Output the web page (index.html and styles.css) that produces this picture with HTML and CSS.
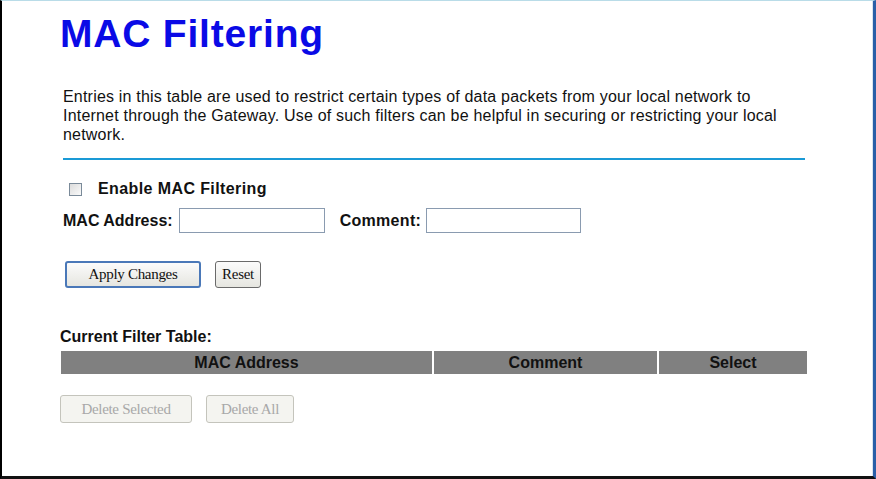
FILE: index.html
```html
<!DOCTYPE html>
<html>
<head>
<meta charset="utf-8">
<title>MAC Filtering</title>
<link rel="stylesheet" href="styles.css">
</head>
<body>
<div class="frame">
  <div class="page">
    <h1 class="title">MAC Filtering</h1>
    <p class="intro">Entries in this table are used to restrict certain types of data packets from your local network to Internet through the Gateway. Use of such filters can be helpful in securing or restricting your local network.</p>
    <hr class="rule">
    <div class="row enable-row">
      <span class="checkbox"></span>
      <span class="label">Enable MAC Filtering</span>
    </div>
    <div class="row field-row">
      <span class="label">MAC Address:</span>
      <span class="input mac-input"></span>
      <span class="label comment-label">Comment:</span>
      <span class="input comment-input"></span>
    </div>
    <div class="row button-row">
      <button class="btn btn-apply">Apply Changes</button>
      <button class="btn btn-reset">Reset</button>
    </div>
    <div class="table-title label">Current Filter Table:</div>
    <div class="filter-table">
      <div class="th th-mac">MAC Address</div>
      <div class="th th-comment">Comment</div>
      <div class="th th-select">Select</div>
    </div>
    <div class="row delete-row">
      <button class="btn btn-disabled btn-del-sel">Delete Selected</button>
      <button class="btn btn-disabled btn-del-all">Delete All</button>
    </div>
  </div>
</div>
</body>
</html>
```

FILE: styles.css
```css
html, body {
  margin: 0;
  padding: 0;
  background: #ffffff;
}
.frame {
  width: 876px;
  height: 479px;
  box-sizing: border-box;
  border-left: 2px solid #000;
  border-top: 1px solid #b9dce8;
  border-right: 3px solid #2a5fa8;
  border-bottom: 3px solid #111;
  box-shadow: inset -1px 0 0 #d9e4ef;
  overflow: hidden;
  font-family: "Liberation Sans", Arial, sans-serif;
  color: #111;
}
.page {
  padding: 9px 0 0 58px;
}
.title {
  margin: 0;
  font-size: 39px;
  font-weight: bold;
  color: #0a0ae6;
  line-height: 48px;
  letter-spacing: 0.8px;
}
.intro {
  margin: 29px 0 0 3px;
  width: 722px;
  font-size: 16px;
  line-height: 19px;
  letter-spacing: 0.2px;
}
.rule {
  margin: 14px 0 0 3px;
  width: 742px;
  height: 2px;
  border: 0;
  background: #1a9ad6;
}
.row {
  display: flex;
  align-items: center;
}
.label {
  font-weight: bold;
  font-size: 16px;
}
.enable-row {
  margin: 20px 0 0 9px;
  gap: 16px;
  letter-spacing: 0.4px;
}
.checkbox {
  width: 11px;
  height: 11px;
  border: 1px solid #7a8a99;
  background: linear-gradient(135deg, #dcdcdc, #fafafa);
}
.field-row {
  margin: 10px 0 0 3px;
}
.input {
  display: block;
  height: 23px;
  border: 1px solid #8a9bb0;
  background: #fff;
}
.mac-input {
  width: 144px;
  margin-left: 6px;
}
.comment-label {
  margin-left: 15px;
  letter-spacing: 0.3px;
}
.comment-input {
  width: 153px;
  margin-left: 5px;
}
.button-row {
  margin: 28px 0 0 5px;
  gap: 14px;
}
.btn {
  font-family: "Liberation Serif", "Times New Roman", serif;
  font-size: 15px;
  height: 27px;
  padding: 0 8px;
  background: linear-gradient(#fbfbfb, #e6e6e0);
  border: 1px solid #6a6a6a;
  border-radius: 3px;
  color: #111;
  letter-spacing: -0.3px;
}
.btn-apply {
  width: 136px;
  border: 2px solid #4a78b8;
}
.btn-reset {
  width: 46px;
  padding: 0;
}
.table-title {
  margin: 40px 0 0 0;
}
.filter-table {
  display: grid;
  grid-template-columns: 371px 223px 148px;
  gap: 2px;
  margin: 5px 0 0 1px;
  width: 748px;
}
.th {
  background: #808080;
  height: 23px;
  line-height: 23px;
  text-align: center;
  font-weight: bold;
  font-size: 16px;
  color: #111;
}
.delete-row {
  margin: 21px 0 0 0;
  gap: 14px;
}
.btn-disabled {
  color: #a8a8a8;
  border: 1px solid #c4c4bc;
  background: #f4f4f0;
  height: 28px;
}
.btn-del-sel {
  width: 132px;
}
.btn-del-all {
  width: 88px;
}
```
